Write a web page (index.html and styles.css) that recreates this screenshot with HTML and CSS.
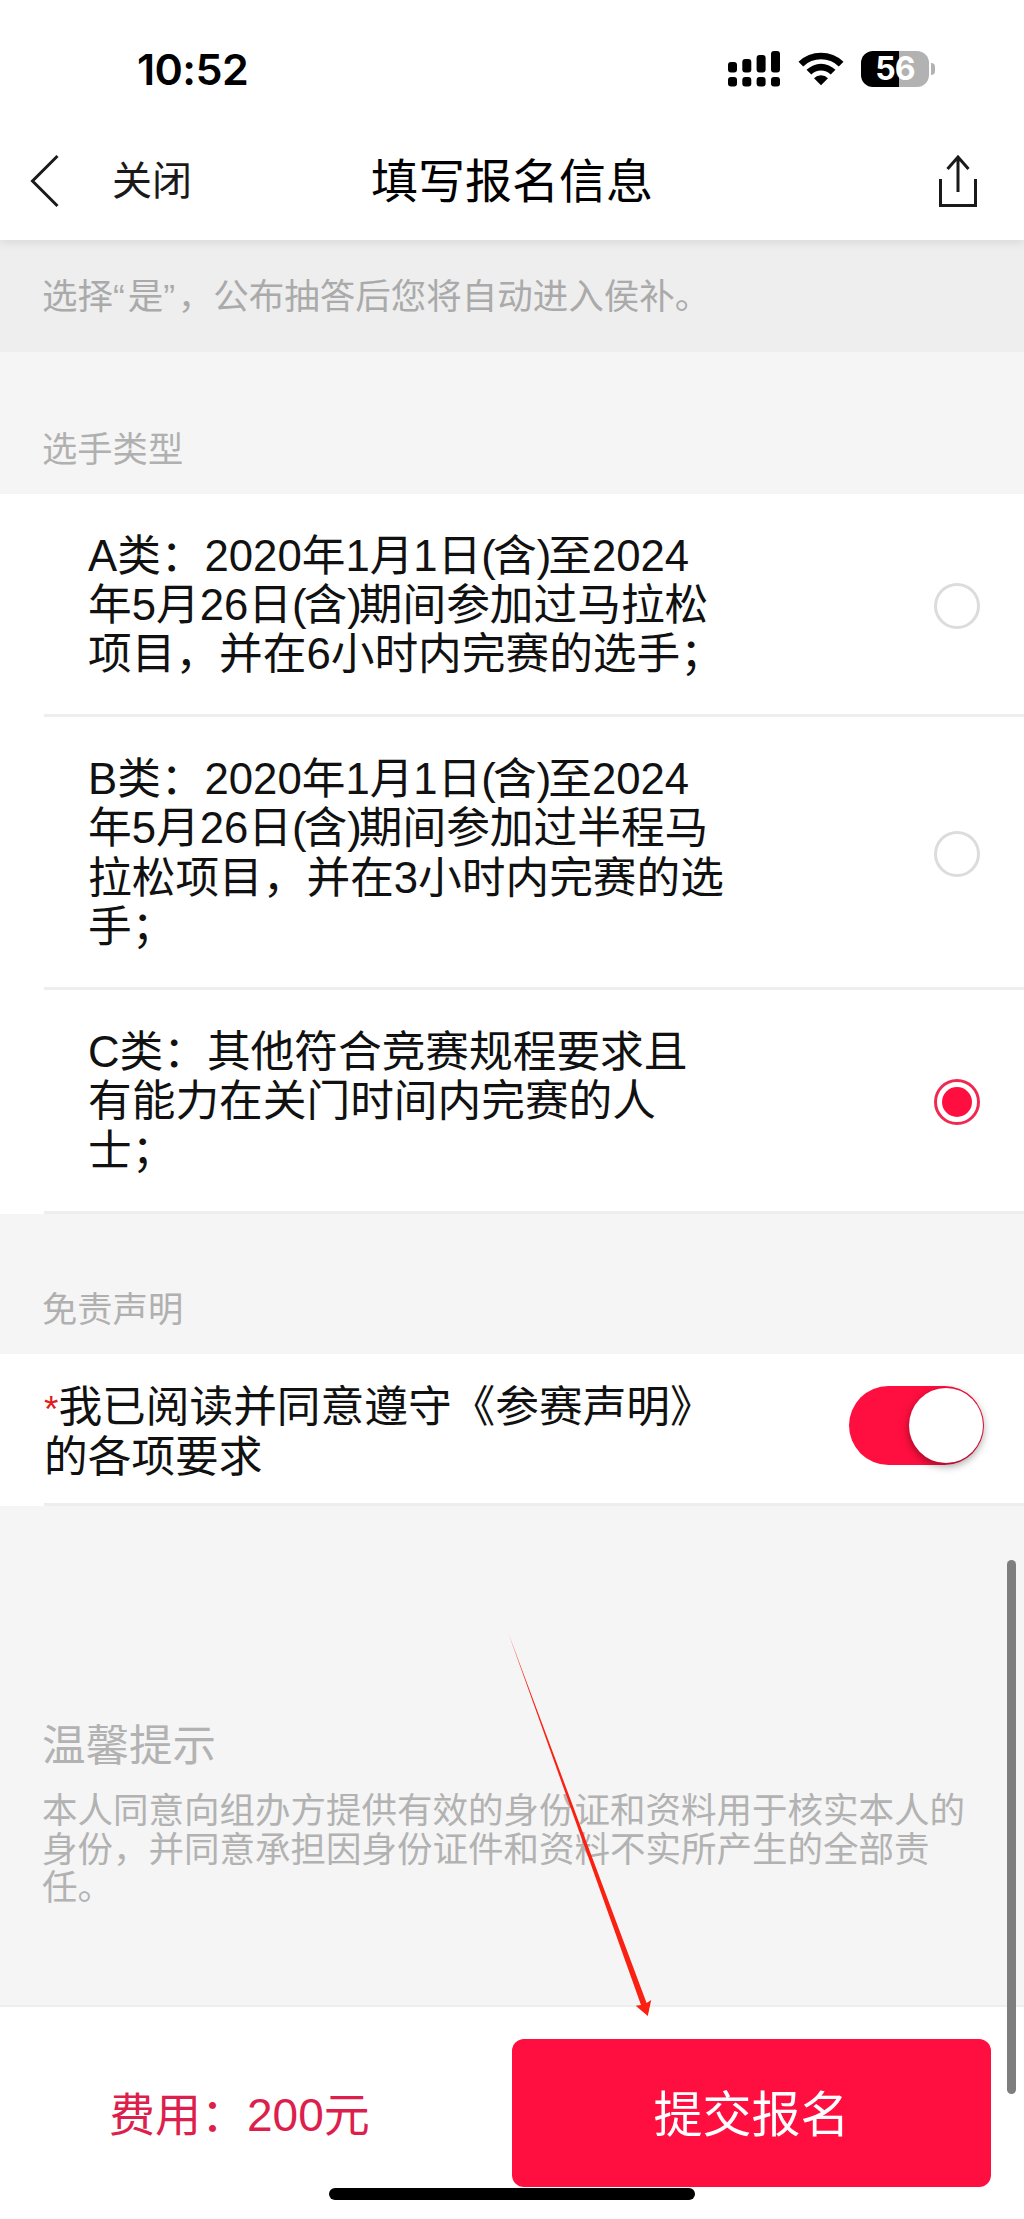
FILE: index.html
```html
<!DOCTYPE html>
<html lang="zh-CN">
<head>
<meta charset="utf-8">
<title>填写报名信息</title>
<link rel="stylesheet" href="styles.css">
</head>
<body>
<div class="screen">
  <header class="header">
    <div class="status">
      <span class="time">10:52</span>
      <span class="indicators">
        <svg class="signal" width="52" height="36" viewBox="0 0 52 36">
          <rect x="0" y="11" width="9" height="10.500" rx="3"/><rect x="14.300" y="8" width="9" height="13.500" rx="3"/><rect x="28.600" y="4" width="9" height="17.500" rx="3"/><rect x="43" y="0" width="9" height="21.500" rx="3"/>
          <rect x="0" y="26" width="9" height="9.500" rx="3"/><rect x="14.300" y="26" width="9" height="9.500" rx="3"/><rect x="28.600" y="26" width="9" height="9.500" rx="3"/><rect x="43" y="26" width="9" height="9.500" rx="3"/>
        </svg>
        <svg class="wifi" width="46" height="34" viewBox="0 0 46 34">
          <path d="M0.500 9.800A32.500 32.500 0 0 1 45.500 9.800L40.800 14.400A25.500 25.500 0 0 0 5.200 14.400Z"/>
          <path d="M8.500 17.800A20.600 20.600 0 0 1 37.500 17.800L32.700 22.400A14 14 0 0 0 13.300 22.400Z"/>
          <path d="M16 26.200A10 10 0 0 1 30 26.200L23 33.300Z"/>
        </svg>
        <span class="battery"><span class="cell">56</span><span class="nub"></span></span>
      </span>
    </div>
    <nav class="nav">
      <div class="nav-left">
        <svg class="back" width="30" height="54" viewBox="0 0 30 54"><path d="M27.500 2L2.500 27L27.500 52"/></svg>
        <span class="close">关闭</span>
      </div>
      <h1 class="title">填写报名信息</h1>
      <svg class="share" width="38" height="54" viewBox="0 0 38 54"><path d="M1.500 25V51.500H36.500V25M19 38V3M8.500 15L19 3L29.500 15"/></svg>
    </nav>
  </header>

  <main class="content">
    <p class="notice">选择<span class="quote">“</span>是<span class="quote">”</span>，公布抽答后您将自动进入侯补。</p>

    <h2 class="label label-type">选手类型</h2>
    <ul class="options">
      <li class="option option-a"><span class="option-text">A类：2020年1月1日<span class="paren">(</span>含<span class="paren">)</span>至2024<br>年5月26日<span class="paren">(</span>含<span class="paren">)</span>期间参加过马拉松<br>项目，并在6小时内完赛的选手；</span><span class="radio"></span></li>
      <li class="option option-b"><span class="option-text">B类：2020年1月1日<span class="paren">(</span>含<span class="paren">)</span>至2024<br>年5月26日<span class="paren">(</span>含<span class="paren">)</span>期间参加过半程马<br>拉松项目，并在3小时内完赛的选<br>手；</span><span class="radio"></span></li>
      <li class="option option-c"><span class="option-text">C类：其他符合竞赛规程要求且<br>有能力在关门时间内完赛的人<br>士；</span><span class="radio checked"></span></li>
    </ul>

    <h2 class="label label-waiver">免责声明</h2>
    <div class="agreement">
      <div class="agreement-row">
        <span class="agreement-text"><span class="required">*</span>我已阅读并同意遵守《参赛声明》<br>的各项要求</span>
        <span class="switch"><span class="knob"></span></span>
      </div>
    </div>

    <section class="tips">
      <h3 class="tips-title">温馨提示</h3>
      <p class="tips-body">本人同意向组办方提供有效的身份证和资料用于核实本人的<br>身份，并同意承担因身份证件和资料不实所产生的全部责<br>任。</p>
    </section>
  </main>

  <footer class="footer">
    <span class="fee">费用：200元</span>
    <button class="submit">提交报名</button>
  </footer>

  <span class="home-bar"></span>
  <span class="scrollbar"></span>
  <svg class="arrow" width="160" height="400" viewBox="500 1625 160 400"><path d="M508.300 1633L641 2005L635.700 2005.700L647.800 2016L651.200 2000L646.600 2003Z"/></svg>
</div>
</body>
</html>
```
FILE: styles.css
```css
* { box-sizing: border-box; margin: 0; padding: 0; }
body {
  font-family: "Liberation Sans", "Noto Sans CJK SC", sans-serif;
  font-weight: 400;
  color: #111;
  background: #fff;
  text-spacing-trim: space-all;
}
.screen { position: relative; width: 1024px; height: 2219px; display: flex; flex-direction: column; overflow: hidden; background: #f5f5f5; }

.header { position: relative; height: 240px; flex: none; background: #fff; box-shadow: 0 2px 10px rgba(0, 0, 0, .1); }
.status { height: 124px; padding: 14px 89px 0 137px; display: flex; align-items: center; justify-content: space-between; }
.time { font: 600 43px/52px Inter, sans-serif; color: #000; letter-spacing: -.6px; }
.indicators { display: flex; align-items: center; }
.signal { margin-right: 18px; }
.wifi { margin-right: 17px; }
.battery { display: flex; align-items: center; gap: 2px; }
.cell { width: 68px; height: 36px; border-radius: 12px; background: linear-gradient(90deg, #000 38px, #b2b2b2 38px); color: #fff; font: 700 32px/36px Inter, sans-serif; text-align: center; letter-spacing: -.8px; }
.nub { width: 4px; height: 12px; border-radius: 0 6px 6px 0; background: #b2b2b2; }

.nav { height: 116px; padding: 0 47px 3px 30px; display: grid; grid-template-columns: 1fr auto 1fr; align-items: center; }
.nav-left { display: flex; align-items: center; }
.close { margin-left: 52px; font-size: 40px; line-height: 56px; color: #1a1a1a; }
.title { font-size: 47px; font-weight: 400; line-height: 60px; color: #000; margin: 3px 0 0 17px; }
.back, .share { fill: none; stroke: #1a1a1a; stroke-width: 3; }
.share { justify-self: end; }

.content { flex: 1; }
.notice { height: 112px; padding: 31px 42px 0; background: #eee; font-size: 35.500px; line-height: 52px; color: #aaa; }
.quote { letter-spacing: 2.800px; }
.label { padding-left: 42px; font-size: 35.300px; line-height: 52px; font-weight: 400; color: #b0b0b0; }
.label-type { height: 142px; padding-top: 72px; }
.label-waiver { height: 140px; padding-top: 70px; }
.options { list-style: none; background: #fff; }
.option { margin-left: 44px; padding: 0 44px; border-bottom: 3px solid #eee; display: flex; align-items: center; justify-content: space-between; }
.option-a { height: 223px; }
.option-b { height: 273px; }
.option-c { height: 224px; }
.option-text, .agreement-text { font-size: 43.700px; line-height: 49.300px; white-space: nowrap; }
.option-text { padding-top: 1px; }
.agreement-text { padding-top: 6px; }
.paren { letter-spacing: -3px; }
.radio { width: 46px; height: 46px; margin-top: 3px; border: 3px solid #dcdcdc; border-radius: 50%; display: grid; place-items: center; }
.radio.checked { border-color: #ee2a52; }
.radio.checked::after { content: ""; width: 30px; height: 30px; border-radius: 50%; background: #ff0f3f; }
.agreement { background: #fff; padding-left: 44px; }
.agreement-row { height: 152px; border-bottom: 3px solid #eee; padding-right: 40px; display: flex; align-items: center; justify-content: space-between; }
.required { font-size: 37px; line-height: 1; color: #e02020; }
.switch { width: 135px; height: 79px; margin-bottom: 6px; padding: 2px 1px 2px 2px; border-radius: 40px; background: #ff0f3f; display: flex; justify-content: flex-end; }
.knob { width: 74px; height: 75px; border-radius: 50%; background: #fff; box-shadow: 0 3px 8px rgba(0, 0, 0, .4); }

.tips { padding: 212px 42px 0; color: #b2b2b2; }
.tips-title { font-size: 43.500px; line-height: 56px; font-weight: 400; }
.tips-body { margin-top: 18px; font-size: 35.500px; line-height: 38.500px; white-space: nowrap; }

.footer { height: 214px; flex: none; background: #fff; border-top: 2px solid #eee; padding: 32px 33px 0 109px; display: flex; justify-content: space-between; align-items: flex-start; }
.fee { font-size: 46px; line-height: 152px; color: #dc1f4c; }
.submit { width: 479px; height: 148px; padding-top: 4px; border: 0; border-radius: 12px; background: #ff0f3f; color: #fff; font-family: inherit; font-size: 49px; line-height: 144px; }

.home-bar { position: absolute; left: 329px; top: 2188px; width: 366px; height: 12px; border-radius: 6px; background: #000; }
.scrollbar { position: absolute; left: 1007px; top: 1560px; width: 9px; height: 534px; border-radius: 5px; background: #7e7e7e; }
.arrow { position: absolute; left: 500px; top: 1625px; fill: #fb2112; }
```
